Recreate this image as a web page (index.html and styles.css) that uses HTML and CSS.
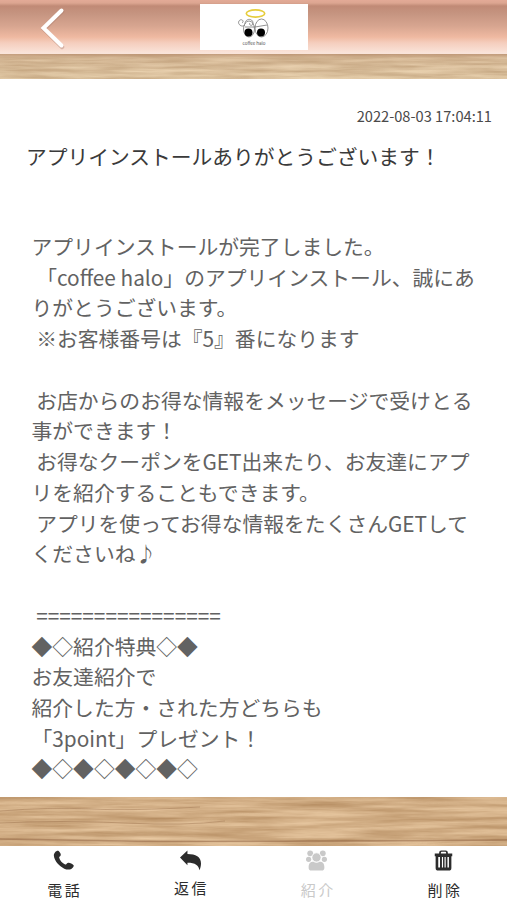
FILE: index.html
```html
<!DOCTYPE html>
<html lang="ja">
<head>
<meta charset="utf-8">
<title>coffee halo</title>
<link rel="stylesheet" href="styles.css">
</head>
<body>
<div class="app">
  <header class="header">
    <svg class="back" viewBox="0 0 28 44" fill="none" stroke-linecap="round" stroke-linejoin="miter">
      <path d="M23 5.5 5 23 23 41" stroke="#a77969" stroke-opacity=".4" stroke-width="4.500"/>
      <path d="M22.500 4.500 4.500 22 22.500 39.500" stroke="#fff" stroke-width="4"/>
    </svg>
    <div class="logo">
      <svg class="logo-mark" viewBox="0 0 34 29" fill="none">
        <ellipse cx="18.500" cy="4.500" rx="9.200" ry="3.600" stroke="#e6cd3c" stroke-width="1.700"/>
        <g stroke="#777" stroke-width=".8">
          <ellipse cx="12" cy="20" rx="5.500" ry="8"/>
          <ellipse cx="24.500" cy="19" rx="6.500" ry="9"/>
          <path d="M8 16c-3 3-8-1-6-4s6 0 3 2M8 15c0-6 8-6 8-1 0 4-5 2-3 0M8 18h10l12-2"/>
        </g>
        <circle cx="11.500" cy="23.500" r="4" fill="#000"/>
        <circle cx="24" cy="23.500" r="4" fill="#000"/>
      </svg>
      <span class="logo-name">coffee halo</span>
    </div>
  </header>
  <svg class="wood wood-top">
    <defs>
      <linearGradient id="edgeTop" x2="0" y2="1">
        <stop offset="0" stop-color="#b98f70" stop-opacity=".8"/>
        <stop offset=".16" stop-color="#b98f70" stop-opacity=".25"/>
        <stop offset="1" stop-color="#b98f70" stop-opacity="0"/>
      </linearGradient>
      <filter id="grainTop" x="0" y="0" width="1" height="1" color-interpolation-filters="sRGB">
        <feTurbulence type="fractalNoise" baseFrequency=".015 .26" numOctaves="4" seed="4"/>
        <feColorMatrix values=".22 0 0 0 .75  .26 0 0 0 .63  .28 0 0 0 .48  0 0 0 0 1"/>
      </filter>
    </defs>
    <rect width="100%" height="100%" filter="url(#grainTop)"/>
    <rect width="100%" height="100%" fill="url(#edgeTop)"/>
  </svg>
  <main class="message">
    <time class="date">2022-08-03 17:04:11</time>
    <h1 class="title">アプリインストールありがとうございます！</h1>
    <div class="body">アプリインストールが完了しました。
 「coffee halo」のアプリインストール、誠にあ
りがとうございます。
 ※お客様番号は『5』番になります

 お店からのお得な情報をメッセージで受けとる
事ができます！
 お得なクーポンをGET出来たり、お友達にアプ
リを紹介することもできます。
 アプリを使ってお得な情報をたくさんGETして
くださいね♪

 ================
◆◇紹介特典◇◆
お友達紹介で
紹介した方・された方どちらも
「3point」プレゼント！
◆◇◆◇◆◇◆◇</div>
  </main>
  <svg class="wood wood-bottom">
    <defs>
      <filter id="grainBottom" x="0" y="0" width="1" height="1" color-interpolation-filters="sRGB">
        <feTurbulence type="fractalNoise" baseFrequency=".011 .2" numOctaves="5" seed="9"/>
        <feColorMatrix values=".24 0 0 0 .7  .28 0 0 0 .54  .3 0 0 0 .37  0 0 0 0 1"/>
      </filter>
    </defs>
    <rect width="100%" height="100%" filter="url(#grainBottom)"/>
    <g fill="none" stroke="#8d6040" stroke-opacity=".5">
      <path d="M0 14q50-4 90-2t110-2" stroke-opacity=".35"/>
      <path d="M0 26q65-3 125 0t100-2" stroke-opacity=".35"/>
      <path d="M0 42q60 1 125 2t382-1" stroke-width="1.300"/>
    </g>
  </svg>
  <nav class="nav">
    <a class="item">
      <svg class="icon" viewBox="0 0 24 24"><path d="M6.500 1.200c1.700 1.700 2.700 3.600 2.300 4.800-.4 1.300-2 1.500-1.700 2.800.7 3 3.600 6.300 6.800 7.700 1.500.7 2-1.700 3.600-1.800 1.800-.2 4.600 1.400 6 2.700.9.900-1.100 3.400-2.600 4.200-2.200 1.200-5.300 1-8-.3C7 18.700 1.600 12.600 1 6.700.7 3.300 4.400-.2 6.500 1.200z"/></svg>
      <span>電話</span>
    </a>
    <a class="item reply">
      <svg class="icon icon-reply" viewBox="0 0 26 24"><path d="M1 8.500 9.500.5v4.200C19 4.700 25 8 25 15.500c0 3-.7 5.400-1.800 7.500-.7-5.500-4.700-8.500-13.700-8.500v3z"/></svg>
      <span>返信</span>
    </a>
    <a class="item disabled">
      <svg class="icon" viewBox="0 0 24 24"><circle cx="4.800" cy="3.800" r="3.300"/><circle cx="19.200" cy="3.800" r="3.300"/><circle cx="3" cy="10.700" r="3"/><circle cx="21" cy="10.700" r="3"/><circle cx="12" cy="8.500" r="5.300" stroke="#fff"/><path d="M3 20c0-4.500 1.700-6.500 5.500-6.500q3.500 2 7 0c3.800 0 5.500 2 5.500 6.500 0 2.500-1 3.500-3 3.500H6c-2 0-3-1-3-3.500z"/></svg>
      <span>紹介</span>
    </a>
    <a class="item">
      <svg class="icon" viewBox="0 0 24 24"><path fill-rule="evenodd" d="M7 4V3q0-2.500 2.500-2.500h5Q17 .5 17 3v1h5v3h-1v13.500q0 3-3 3H6q-3 0-3-3V7H2V4zm2 0h6V3q0-1-1-1h-4Q9 2 9 3zM6 8v12h2V8zm4.200 0v12h1.300V8zm3 0v12h1.300V8zM16.500 8v12h1.700V8z"/></svg>
      <span>削除</span>
    </a>
  </nav>
</div>
</body>
</html>
```
FILE: styles.css
```css
* {
  box-sizing: border-box;
}

body {
  margin: 0;
  background: #fff;
  font-family: "Noto Sans CJK JP", sans-serif;
}

.app {
  display: flex;
  flex-direction: column;
  width: 507px;
  height: 900px;
  overflow: hidden;
}

.header {
  display: grid;
  grid-template-columns: 200px 108px 1fr;
  height: 54px;
  padding-top: 4px;
  background: linear-gradient(#e3aa97 0, #dca691 3px, #c08a76 6px, #c69581 14px, #d7a590 26px, #efb9a1 37px, #f5cebe 43px, #fae4da 53px, #f7e4da 54px);
}

.back {
  width: 28px;
  height: 44px;
  margin: 2px 0 0 39px;
}

.logo {
  display: flex;
  flex-direction: column;
  align-items: center;
  height: 46px;
  padding-top: 5px;
  background: #fff;
}

.logo-mark {
  width: 34px;
  height: 29px;
}

.logo-name {
  margin-top: 2px;
  font-size: 4.5px;
  line-height: 7px;
  color: #555;
}

.wood {
  display: block;
  flex: none;
  width: 100%;
}

.wood-top {
  height: 25px;
}

.wood-bottom {
  height: 49px;
}

.message {
  display: flex;
  flex-direction: column;
  height: 718px;
  flex: none;
  background: #fff;
  text-spacing-trim: space-all;
}

.date {
  margin: 26px 15px 0 0;
  font-size: 14.65px;
  line-height: 22px;
  text-align: right;
  color: #4a4a4a;
}

.title {
  margin: 14px 0 0 26px;
  font-size: 20.75px;
  line-height: 30px;
  font-weight: 400;
  white-space: nowrap;
  color: #3a3a3a;
}

.body {
  margin: 60px 0 0 31.5px;
  font-size: 20.8px;
  line-height: 30.74px;
  white-space: pre;
  color: #626262;
}

.nav {
  display: grid;
  grid-template-columns: repeat(4, 1fr);
  height: 54px;
  background: #fff;
}

.item {
  display: flex;
  flex-direction: column;
  align-items: center;
  padding-top: 4px;
  font-size: 15px;
  line-height: 20px;
  letter-spacing: 2.5px;
  color: #2c2c2c;
}

.item span {
  margin: 9px 0 0 3px;
}

.reply span {
  margin-top: 7px;
}

.icon {
  width: 21px;
  height: 21px;
  fill: currentColor;
}

.icon-reply {
  width: 25px;
}

.disabled {
  color: #c9c9c9;
}
```
